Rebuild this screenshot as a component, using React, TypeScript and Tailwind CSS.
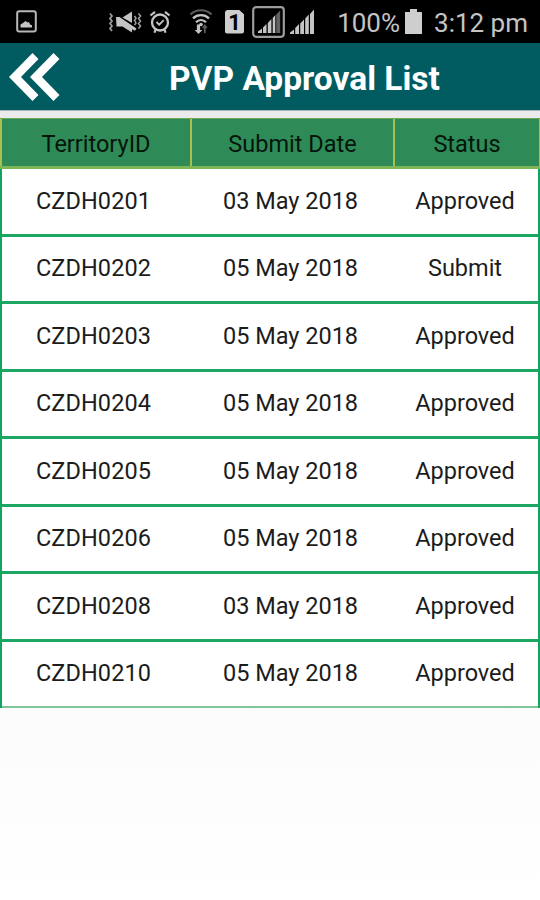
type Approval = {
  territory: string;
  date: string;
  status: string;
};

const approvals: Approval[] = [
  { territory: 'CZDH0201', date: '03 May 2018', status: 'Approved' },
  { territory: 'CZDH0202', date: '05 May 2018', status: 'Submit' },
  { territory: 'CZDH0203', date: '05 May 2018', status: 'Approved' },
  { territory: 'CZDH0204', date: '05 May 2018', status: 'Approved' },
  { territory: 'CZDH0205', date: '05 May 2018', status: 'Approved' },
  { territory: 'CZDH0206', date: '05 May 2018', status: 'Approved' },
  { territory: 'CZDH0208', date: '03 May 2018', status: 'Approved' },
  { territory: 'CZDH0210', date: '05 May 2018', status: 'Approved' },
];

function StatusBar() {
  return (
    <div className="flex h-[43px] items-center bg-black pl-4 pr-[12px] text-[26px] text-[#c4c4c4]">
      {/* Screenshot saved */}
      <svg width="21" height="23" viewBox="0 0 21 23" fill="none">
        <rect x="1.2" y="1.2" width="18.6" height="20.2" rx="2" stroke="#b8b8b8" strokeWidth="2" />
        <path d="M4.5 17.5v-3l2.5-1.5 2.5-2 2 1.5 1.5-.5 1 2.5 2 .8v2.2z" fill="#c4c4c4" />
      </svg>

      {/* Mute with vibrate */}
      <svg className="ml-[71px]" width="34" height="24" viewBox="0 0 34 24" fill="none">
        <path d="M2 3.5l2 2.500-2 2.500 2 2.500-2 2.500 2 2.500-2 2.500 2 2.500" stroke="#a0a0a0" strokeWidth="1.700" />
        <path d="M26.500 6l1.500 2.300-1.500 2.300 1.500 2.300-1.500 2.300M30.500 3.500l2 2.500-2 2.500 2 2.500-2 2.500 2 2.500-2 2.500" stroke="#a0a0a0" strokeWidth="1.500" />
        <path d="M14.500 7.500L24 1.500v11.500z" fill="#c4c4c4" />
        <path d="M8 7h3.500l17 11.500-1.500 2.200-3-1.500v3.300L14.500 16.500H8.500z" fill="#c4c4c4" />
      </svg>

      {/* Alarm */}
      <svg className="ml-[7px]" width="22" height="24" viewBox="0 0 22 24" fill="none" stroke="#c4c4c4">
        <circle cx="11" cy="12.500" r="8" strokeWidth="2.300" />
        <path d="M7.500 12l2.700 2.700 4.500-4.500" strokeWidth="1.800" />
        <path d="M1.500 5.500L6 1.800M20.500 5.500L16 1.800M6.500 19.500L5.500 22.800M15.500 19.500l1 3.300" strokeWidth="2.200" />
      </svg>

      {/* Wi-Fi with traffic arrows */}
      <svg className="ml-[18px]" width="24" height="27" viewBox="0 0 24 27" fill="none">
        <path d="M1.500 6.500C7 .7 17 .7 22.500 6.500" stroke="#5c5c5c" strokeWidth="2" />
        <path d="M4 10.300c4.500-4.200 11.500-4.200 16 0M7 14.300c3-3 7-3 10 0" stroke="#c4c4c4" strokeWidth="2.300" />
        <path d="M7.900 16.500h3.200v5.500h2.200L9.500 26l-3.800-4h2.200z" fill="#c4c4c4" />
        <circle cx="12" cy="16.500" r="1.800" fill="#c4c4c4" />
        <path d="M15.800 25v-7.500M13.800 20l2-2.500 2 2.500" stroke="#5c5c5c" strokeWidth="1.800" />
      </svg>

      {/* SIM slot */}
      <div className="ml-[12px] grid h-[24px] w-[19px] place-items-center rounded-[3px] bg-[#cecece] pt-[2px] text-[22px] font-bold leading-none text-black [clip-path:polygon(0_0,72%_0,100%_20%,100%_100%,0_100%)]">
        1
      </div>

      {/* Signal, one wedge cut into bars per slot */}
      <svg className="ml-[8px]" width="33" height="32" viewBox="0 0 33 32" fill="none">
        <rect x="1.200" y="1.200" width="30.600" height="29.600" rx="3" stroke="#9c9c9c" strokeWidth="2.200" />
        <path d="M6 27v-1.500l4-3V27zM11 27v-5.500l3.500-3.500v9zM15.800 27V17l3.600-4v14zM20.700 27V12l2.600-3v18z" fill="#c4c4c4" />
        <path d="M24.200 27V8.500L28.200 4.500V27z" fill="#626262" />
      </svg>
      <svg className="ml-[5px]" width="25" height="26" viewBox="0 0 25 26" fill="#c4c4c4">
        <path d="M0 25v-1.500l4-3V25zM5.200 25v-6L9 15v10zM10.200 25V14.500l3.800-4V25zM15.200 25V9.500l3.600-4V25zM20 25V5l4-4.500V25z" />
      </svg>

      <span className="ml-auto pt-[3px]">100%</span>
      <svg className="ml-[5px]" width="17" height="25" viewBox="0 0 17 25" fill="#cecece">
        <path d="M5 0h7v3h5v22H0V3h5z" />
      </svg>
      <span className="ml-[12px] pt-[3px]">3:12 pm</span>
    </div>
  );
}

function TitleBar() {
  return (
    <header className="flex h-[67px] items-center bg-[#015c62] pl-[9px]">
      <button aria-label="Back">
        <svg width="51" height="48" viewBox="0 0 51 48" fill="#fff">
          <path d="M0 24L23.500 0l6 6L12 24l17.500 18-6 6z" />
          <path d="M21 24L44.500 0l6 6L33 24l17.500 18-6 6z" />
        </svg>
      </button>
      <h1 className="ml-[109px] whitespace-nowrap pt-[5px] text-[33.500px] font-bold leading-none text-white">PVP Approval List</h1>
    </header>
  );
}

export default function App() {
  return (
    <div className="min-h-[900px] w-[540px] overflow-hidden bg-linear-to-b from-[#fbfbfb] from-78% to-white font-['Roboto',sans-serif]">
      <StatusBar />
      <TitleBar />

      <main>
        <div className="border-t border-[#a9b5b5] bg-[#ebebeb] pt-[7px]">
          <div className="grid h-[51px] grid-cols-[192px_203px_145px] border-b-[3px] border-t border-b-[#7db657] border-t-[#6fa653] bg-[#2e8b57] text-[23.500px] text-[#06150c]">
            <div className="flex items-center justify-center border-l-2 border-r-2 border-[#a9c04c] pt-[5px]">TerritoryID</div>
            <div className="flex items-center justify-center border-r-2 border-[#a9c04c] pt-[5px]">Submit Date</div>
            <div className="flex items-center justify-center border-r border-[#a9c04c] pt-[5px]">Status</div>
          </div>
        </div>

        <div className="border-l-2 border-r-2 border-[#12a45e] bg-white">
          {approvals.map((row) => (
            <div
              key={row.territory}
              className="grid h-[67.500px] grid-cols-[183px_211px_138px] items-center border-b-[3px] border-[#1ca763] text-[23.500px] text-[#1c1c1c] last:h-[66.500px] last:border-b-2 last:border-[#7fc59c]"
            >
              <span className="text-center tracking-[0.1px]">{row.territory}</span>
              <span className="text-center">{row.date}</span>
              <span className="text-center">{row.status}</span>
            </div>
          ))}
        </div>
      </main>
    </div>
  );
}
